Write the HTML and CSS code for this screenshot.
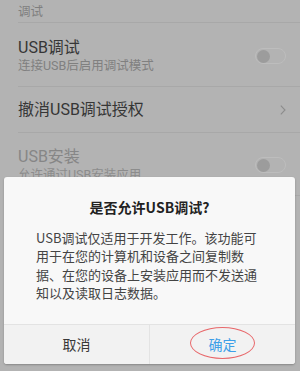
FILE: index.html
```html
<!DOCTYPE html>
<html>
  <head>
    <meta charset="utf-8">
    <title>USB调试</title>
    <link rel="stylesheet" href="styles.css">
  </head>
  <body>
    <div class="settings">
      <div class="group-title">调试</div>
      <div class="item">
        <div class="item-text">
          <div class="item-title">USB调试</div>
          <div class="item-sub">连接USB后启用调试模式</div>
        </div>
        <span class="toggle"><span class="knob"></span></span>
      </div>
      <div class="item item-short">
        <div class="item-text">
          <div class="item-title">撤消USB调试授权</div>
        </div>
        <svg class="chevron" width="6" height="10" viewBox="0 0 6 10">
          <path d="M0.8 0.6 L5 5 L0.8 9.4" fill="none" stroke="#8c8c8c" stroke-width="1.1"/>
        </svg>
      </div>
      <div class="item item-off">
        <div class="item-text">
          <div class="item-title">USB安装</div>
          <div class="item-sub">允许通过USB安装应用</div>
        </div>
        <span class="toggle"><span class="knob"></span></span>
      </div>
    </div>

    <div class="dialog">
      <div class="dialog-title">是否允许USB调试?</div>
      <div class="dialog-body">USB调试仅适用于开发工作。该功能可用于在您的计算机和设备之间复制数据、在您的设备上安装应用而不发送通知以及读取日志数据。</div>
      <div class="dialog-buttons">
        <div class="btn">取消</div>
        <div class="btn btn-ok">确定<span class="circle"></span></div>
      </div>
    </div>
  </body>
</html>
```

FILE: styles.css
```css
body {
  margin: 0;
  background-color: #b3b3b3;
  font-family: "Noto Sans CJK SC", "Noto Sans", sans-serif;
  width: 300px;
  height: 371px;
  overflow: hidden;
}
.settings {
  padding-left: 18px;
  font-family: Roboto, "Noto Sans CJK SC", sans-serif;
}
.group-title {
  font-size: 12.5px;
  line-height: 16px;
  color: #7f7f7f;
  padding: 4px 0 2px;
  border-bottom: 1px solid #a8a8a8;
}
.item {
  display: flex;
  align-items: center;
  justify-content: space-between;
  padding: 15px 14px 12px 0;
  border-bottom: 1px solid #a8a8a8;
}
.item-short {
  padding: 13px 14px 12px 0;
}
.item-off {
  padding-top: 14px;
}
.item-title {
  font-size: 16px;
  line-height: 20px;
  color: #363636;
}
.item-sub {
  font-size: 12.5px;
  line-height: 16px;
  color: #808080;
}
.item-off .item-title {
  color: #868686;
}
.item-off .item-sub {
  color: #8c8c8c;
}
.toggle {
  width: 27px;
  height: 14px;
  border: 1px solid #bdbdbd;
  border-radius: 8px;
  display: flex;
  align-items: center;
  padding: 0 1px;
}
.knob {
  width: 13px;
  height: 13px;
  border-radius: 50%;
  background-color: #9c9c9c;
}

.dialog {
  position: absolute;
  left: 4px;
  top: 177px;
  width: 291px;
  background-color: #f8f8f8;
  border-radius: 3px;
  box-shadow: 0 1px 2px rgba(0, 0, 0, 0.25);
  overflow: hidden;
}
.dialog-title {
  padding-top: 20px;
  text-align: center;
  font-size: 14px;
  line-height: 20px;
  font-weight: bold;
  color: #222222;
}
.dialog-body {
  margin-top: 12px;
  padding: 0 32px 22px;
  font-size: 13px;
  line-height: 18.3px;
  color: #444444;
}
.dialog-buttons {
  display: flex;
  border-top: 1px solid #e3e3e3;
  background-color: #f2f2f2;
}
.btn {
  flex: 1;
  height: 39px;
  line-height: 39px;
  text-align: center;
  font-size: 14px;
  color: #383838;
  position: relative;
}
.btn-ok {
  color: #3d9fe8;
  border-left: 1px solid #e3e3e3;
}
.circle {
  position: absolute;
  left: 50%;
  top: 50%;
  width: 63px;
  height: 30px;
  margin-left: -33px;
  margin-top: -18px;
  border: 1px solid #e8676a;
  border-radius: 50%;
}
```
